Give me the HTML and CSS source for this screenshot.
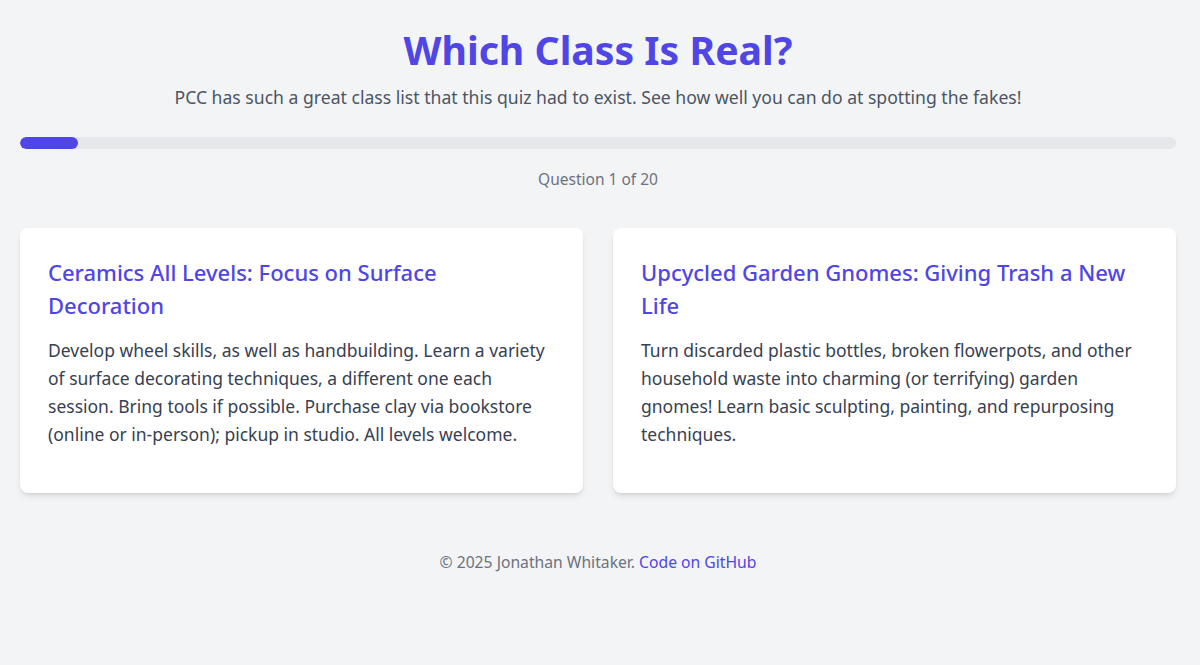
FILE: index.html
```html
<!DOCTYPE html>
<html lang="en">
<head>
<meta charset="utf-8">
<title>Which Class Is Real?</title>
<link rel="stylesheet" href="styles.css">
</head>
<body>
<div class="container">
  <header class="header">
    <h1 class="title">Which Class Is Real?</h1>
    <p class="subtitle">PCC has such a great class list that this quiz had to exist. See how well you can do at spotting the fakes!</p>
  </header>
  <div class="progress"><div class="progress-fill" style="width:5%"></div></div>
  <p class="counter">Question 1 of 20</p>
  <div class="cards">
    <div class="card">
      <h2 class="card-title">Ceramics All Levels: Focus on Surface Decoration</h2>
      <p class="card-text">Develop wheel skills, as well as handbuilding. Learn a variety of surface decorating techniques, a different one each session. Bring tools if possible. Purchase clay via bookstore (online or in-person); pickup in studio. All levels welcome.</p>
    </div>
    <div class="card">
      <h2 class="card-title">Upcycled Garden Gnomes: Giving Trash a New Life</h2>
      <p class="card-text">Turn discarded plastic bottles, broken flowerpots, and other household waste into charming (or terrifying) garden gnomes! Learn basic sculpting, painting, and repurposing techniques.</p>
    </div>
  </div>
  <footer class="footer">© 2025 Jonathan Whitaker. <a class="footer-link" href="#">Code on GitHub</a></footer>
</div>
</body>
</html>
```
FILE: styles.css
```css
* { box-sizing: border-box; }
html, body { margin: 0; padding: 0; }
body {
  background: #f3f4f6;
  font-family: "Noto Sans", "Open Sans", sans-serif;
  color: #374151;
}
.container {
  padding: 24px 24px 40px 20px;
}
.header { text-align: center; }
.title {
  margin: 0;
  font-size: 39.2px;
  line-height: 52px;
  font-weight: 700;
  color: #4f46e5;
}
.subtitle {
  margin: 8px 0 0;
  font-size: 17.6px;
  line-height: 26px;
  color: #4b5563;
}
.progress {
  margin-top: 27px;
  height: 12px;
  background: #e5e7eb;
  border-radius: 9999px;
  overflow: hidden;
}
.progress-fill {
  height: 100%;
  background: #4f46e5;
  border-radius: 9999px;
}
.counter {
  margin: 18px 0 0;
  text-align: center;
  font-size: 15.5px;
  line-height: 24px;
  color: #6b7280;
}
.cards {
  margin-top: 37px;
  display: grid;
  grid-template-columns: 1fr 1fr;
  gap: 30px;
}
.card {
  background: #fff;
  border-radius: 8px;
  box-shadow: 0 4px 6px -1px rgba(0,0,0,0.1), 0 2px 4px -2px rgba(0,0,0,0.1);
  padding: 28px 28px 45px;
}
.card-title {
  margin: 0;
  font-size: 22px;
  line-height: 33px;
  font-weight: 500;
  color: #4f46e5;
}
.card-text {
  margin: 14px 0 0;
  font-size: 17.5px;
  line-height: 28px;
  color: #374151;
}
.footer {
  margin-top: 57px;
  text-align: center;
  font-size: 15.7px;
  line-height: 24px;
  color: #6b7280;
}
.footer-link {
  color: #4f46e5;
  text-decoration: none;
}
```
